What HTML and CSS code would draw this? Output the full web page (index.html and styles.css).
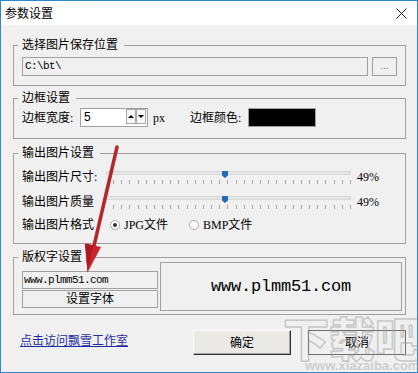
FILE: index.html
```html
<!DOCTYPE html>
<html lang="zh-CN">
<head>
<meta charset="utf-8">
<title>参数设置</title>
<link rel="stylesheet" href="styles.css">
</head>
<body>
<div class="window">
  <div class="titlebar">
    <span class="title">参数设置</span>
    <svg class="close" width="11" height="11" viewBox="0 0 11 11"><path d="M0.5 0.5 L10.5 10.5 M10.5 0.5 L0.5 10.5" stroke="#222" stroke-width="1" fill="none"/></svg>
  </div>
  <div class="body">
    <div class="group g1">
      <div class="legend">选择图片保存位置</div>
      <div class="path-row">
        <div class="field path">C:\bt\</div>
        <div class="browse">...</div>
      </div>
    </div>

    <div class="group g2">
      <div class="legend">边框设置</div>
      <div class="border-row">
        <span class="lbl lbl-w">边框宽度:</span>
        <div class="spin">
          <span class="spin-val">5</span>
          <div class="spin-btns">
            <div class="sb"><span class="tri-up"></span></div>
            <div class="sb"><span class="tri-down"></span></div>
          </div>
        </div>
        <span class="unit">px</span>
        <span class="lbl lbl-c">边框颜色:</span>
        <div class="color-box"></div>
      </div>
    </div>

    <div class="group g3">
      <div class="legend">输出图片设置</div>
      <div class="slider-row first">
        <span class="lbl lbl-s">输出图片尺寸:</span>
        <div class="slider">
          <div class="track"></div>
          <div class="ticks"></div>
          <svg class="thumb" width="6" height="7" viewBox="0 0 6 7"><polygon points="0,0 6,0 6,4.5 3,7 0,4.5" fill="#1f6db5"/></svg>
        </div>
        <span class="pct">49%</span>
      </div>
      <div class="slider-row">
        <span class="lbl lbl-s">输出图片质量</span>
        <div class="slider">
          <div class="track"></div>
          <div class="ticks"></div>
          <svg class="thumb" width="6" height="7" viewBox="0 0 6 7"><polygon points="0,0 6,0 6,4.5 3,7 0,4.5" fill="#1f6db5"/></svg>
        </div>
        <span class="pct">49%</span>
      </div>
      <div class="radio-row">
        <span class="lbl lbl-r">输出图片格式</span>
        <label class="opt opt-jpg"><span class="radio checked"></span><span class="opt-text">JPG文件</span></label>
        <label class="opt"><span class="radio"></span><span class="opt-text">BMP文件</span></label>
      </div>
    </div>

    <div class="group g4">
      <div class="legend">版权字设置</div>
      <div class="copy-row">
        <div class="copy-left">
          <div class="copy-field">www.plmm51.com</div>
          <div class="copy-btn">设置字体</div>
        </div>
        <div class="preview">www.plmm51.com</div>
      </div>
    </div>

    <div class="footer">
      <a class="link" href="#">点击访问飘雪工作室</a>
      <div class="btn ok">确定</div>
      <div class="btn cancel">取消</div>
    </div>
  </div>

  <div class="watermark">
    <div class="wm-big">下载吧</div>
    <div class="wm-small">www.xiazaiba.com</div>
  </div>

  <svg class="arrow" width="418" height="373" viewBox="0 0 418 373">
    <line x1="117" y1="147" x2="93.5" y2="248" stroke="#b3262c" stroke-width="3.5" stroke-linecap="round"/>
    <polygon points="101,247 85,243.5 87.5,272.5" fill="#c9252b"/>
    <polygon points="93,245.2 85,243.5 87.5,272.5" fill="#a81c22"/>
  </svg>
</div>
</body>
</html>
```

FILE: styles.css
```css
html, body {
  margin: 0;
  padding: 0;
}

body {
  width: 418px;
  height: 373px;
  overflow: hidden;
  background: #f0f0f0;
  font-family: "Liberation Serif", "Noto Sans CJK SC", sans-serif;
  font-size: 12px;
  line-height: 16px;
  color: #000;
}

.window {
  position: relative;
  box-sizing: border-box;
  width: 418px;
  height: 373px;
  border: 1px solid #2f86c8;
  background: #f0f0f0;
  display: flex;
  flex-direction: column;
}

.titlebar {
  height: 24px;
  background: #fff;
  display: flex;
  align-items: center;
  justify-content: space-between;
  padding: 0 10px 0 4px;
}

.title {
  font-family: "Noto Sans CJK SC", sans-serif;
  font-size: 12px;
}

.close {
  display: block;
}

.body {
  flex: 1;
  display: flex;
  flex-direction: column;
  padding: 20px 11px 0 12px;
}

.group {
  border: 1px solid #a0a0a0;
  padding: 0 8px 9px 8px;
}

.legend {
  width: max-content;
  margin: -9px 0 0 -4px;
  padding: 0 6px 0 4px;
  background: #f0f0f0;
  line-height: 16px;
}

/* group 1 */
.path-row {
  display: flex;
  gap: 4px;
  margin-top: 4px;
}

.field {
  box-sizing: border-box;
  height: 19px;
  border: 1px solid #a0a0a0;
  background: #f0f0f0;
}

.path {
  width: 346px;
  padding-left: 2px;
  font-family: "Liberation Mono", monospace;
  font-size: 11px;
  line-height: 17px;
  letter-spacing: -0.6px;
}

.browse {
  box-sizing: border-box;
  width: 25px;
  height: 19px;
  border: 1px solid #a0a0a0;
  text-align: center;
  line-height: 15px;
  color: #808080;
  font-size: 11px;
}

/* group 2 */
.g2 {
  margin-top: 12px;
  padding-bottom: 11px;
}

.border-row {
  display: flex;
  align-items: center;
  height: 19px;
  margin-top: 2px;
}

.lbl {
  flex: none;
}

.lbl-w, .lbl-c {
  width: 58px;
}

.spin {
  box-sizing: border-box;
  width: 68px;
  height: 19px;
  border: 1px solid #a0a0a0;
  background: #fff;
  display: flex;
  justify-content: space-between;
  padding-left: 3px;
  font-family: "Liberation Sans", sans-serif;
}

.spin-val {
  line-height: 17px;
}

.spin-btns {
  display: flex;
  margin-right: 1px;
  align-self: flex-start;
}

.sb {
  box-sizing: border-box;
  width: 10px;
  height: 15px;
  border: 1px solid #a8a8a8;
  background: #f7f7f7;
  display: flex;
  align-items: center;
  justify-content: center;
}

.tri-up, .tri-down {
  width: 0;
  height: 0;
  border-left: 3px solid transparent;
  border-right: 3px solid transparent;
}

.tri-up {
  border-bottom: 3px solid #000;
}

.tri-down {
  border-top: 3px solid #000;
}

.unit {
  width: 37px;
  margin-left: 5px;
}

.color-box {
  box-sizing: border-box;
  width: 68px;
  height: 19px;
  background: #000;
  border: 1px solid #a0a0a0;
}

/* group 3 */
.g3 {
  margin-top: 14px;
  padding-bottom: 7px;
}

.slider-row {
  display: flex;
  align-items: center;
  height: 25px;
}

.slider-row.first {
  margin-top: 3px;
}

.lbl-s {
  width: 78px;
}

.slider {
  position: relative;
  width: 255px;
  height: 25px;
  flex: none;
}

.track {
  box-sizing: border-box;
  width: 245px;
  height: 4px;
  margin: 7px 0 0 6px;
  border: 1px solid #d8d8d8;
  background: #e6e6e6;
}

.ticks {
  width: 238px;
  height: 4px;
  margin: 5px 0 0 13px;
  background: repeating-linear-gradient(90deg, #a8a8a8 0 1px, transparent 1px 8.17px);
}

.thumb {
  position: absolute;
  left: 122px;
  top: 7px;
}

.pct {
  margin-left: 2px;
}

.radio-row {
  display: flex;
  align-items: center;
  height: 22px;
}

.lbl-r {
  width: 88px;
}

.opt {
  display: flex;
  align-items: center;
}

.opt-jpg {
  width: 79px;
}

.radio {
  box-sizing: border-box;
  width: 10px;
  height: 10px;
  border-radius: 50%;
  border: 1px solid #a8a8a8;
  background: #fff;
  display: flex;
  align-items: center;
  justify-content: center;
}

.radio.checked::after {
  content: "";
  width: 4px;
  height: 4px;
  border-radius: 50%;
  background: #333;
}

.opt-text {
  margin-left: 4px;
}

/* group 4 */
.g4 {
  margin-top: 13px;
  padding: 0 3px 3px 8px;
}

.copy-row {
  display: flex;
  gap: 2px;
  margin-top: -3px;
}

.copy-left {
  width: 136px;
  margin-top: 9px;
  display: flex;
  flex-direction: column;
  gap: 1px;
}

.copy-field {
  box-sizing: border-box;
  height: 18px;
  border: 1px solid #a0a0a0;
  padding-left: 1px;
  font-family: "Liberation Mono", monospace;
  font-size: 11px;
  line-height: 16px;
  letter-spacing: -0.6px;
}

.copy-btn {
  box-sizing: border-box;
  height: 18px;
  border: 1px solid #a0a0a0;
  text-align: center;
  line-height: 16px;
}

.preview {
  box-sizing: border-box;
  width: 242px;
  height: 49px;
  border: 1px solid #a0a0a0;
  display: flex;
  align-items: center;
  justify-content: center;
  font-family: "Liberation Mono", monospace;
  font-size: 17px;
  letter-spacing: -0.2px;
}

/* footer */
.footer {
  display: flex;
  align-items: center;
  height: 25px;
  margin-top: 15px;
}

.link {
  margin-left: 7px;
  margin-top: -3px;
  color: #1c2ca0;
  text-decoration: underline;
}

.btn {
  box-sizing: border-box;
  width: 98px;
  height: 25px;
  display: flex;
  align-items: center;
  justify-content: center;
  background: #ebe9e5;
}

.ok {
  margin-left: auto;
  border: 1px solid;
  border-color: #ffffff #333333 #333333 #ffffff;
  box-shadow: inset -1px -1px 0 #a0a0a0;
}

.cancel {
  margin-left: 17px;
  border: 1px solid #6e6e6e;
  background: #efefef;
}

/* overlays */
.watermark {
  position: absolute;
  left: 282px;
  top: 312px;
  pointer-events: none;
}

.wm-big {
  font-family: "Noto Sans CJK SC", sans-serif;
  font-weight: 900;
  font-size: 46px;
  line-height: 46px;
  color: transparent;
  -webkit-text-stroke: 1.5px rgba(150, 150, 150, 0.45);
  white-space: nowrap;
}

.wm-small {
  margin: 0 0 0 22px;
  font-family: "Liberation Sans", sans-serif;
  font-weight: bold;
  font-size: 13px;
  line-height: 13px;
  color: rgba(160, 160, 160, 0.45);
  white-space: nowrap;
}

.arrow {
  position: absolute;
  left: -1px;
  top: -1px;
  pointer-events: none;
}
```
